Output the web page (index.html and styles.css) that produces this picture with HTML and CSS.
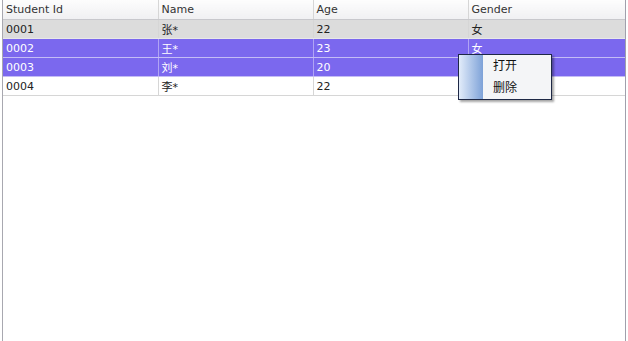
FILE: index.html
```html
<!DOCTYPE html>
<html lang="zh">
<head>
    <meta charset="UTF-8">
    <title>Students</title>
    <link rel="stylesheet" href="styles.css">
</head>
<body>
    <div class="grid">
        <table class="student-table">
            <colgroup>
                <col class="col-fixed">
                <col class="col-fixed">
                <col class="col-fixed">
                <col>
            </colgroup>
            <thead>
                <tr>
                    <th>Student Id</th>
                    <th>Name</th>
                    <th>Age</th>
                    <th>Gender</th>
                </tr>
            </thead>
            <tbody>
                <tr class="current">
                    <td>0001</td><td>张*</td><td>22</td><td>女</td>
                </tr>
                <tr class="selected">
                    <td>0002</td><td>王*</td><td>23</td><td>女</td>
                </tr>
                <tr class="selected">
                    <td>0003</td><td>刘*</td><td>20</td><td></td>
                </tr>
                <tr>
                    <td>0004</td><td>李*</td><td>22</td><td></td>
                </tr>
            </tbody>
        </table>

        <ul class="context-menu">
            <li>打开</li>
            <li>删除</li>
        </ul>
    </div>
</body>
</html>
```

FILE: styles.css
```css
body {
    margin: 0;
    font-family: "DejaVu Sans", "Noto Sans CJK SC", sans-serif;
    font-size: 11px;
    background-color: white;
}

.grid {
    position: relative;
    margin-left: 2px;
    width: 622px;
    height: 341px;
    border-left: 1px solid #a8a8b0;
    border-right: 1px solid #a0a0ac;
}

.student-table {
    border-collapse: collapse;
    table-layout: fixed;
    width: 622px;
}

.col-fixed {
    width: 155px;
}

.student-table th,
.student-table td {
    height: 18px;
    padding: 0 0 0 3px;
    text-align: left;
    font-weight: normal;
    border-right: 1px solid #d6d6d6;
    border-bottom: 1px solid #d6d6d6;
    color: #222;
    white-space: nowrap;
    overflow: hidden;
}

.student-table th {
    height: 19px;
    background: linear-gradient(#fdfdfd, #f0f0f2);
    border-bottom: 1px solid #c8c8cc;
    color: #333;
}

.student-table th:last-child,
.student-table td:last-child {
    border-right: none;
}

.student-table tr.current td {
    background-color: #dcdcdc;
    border-bottom-color: #e8e8e8;
}

.student-table tr.selected td {
    background-color: #7b68ee;
    color: white;
    border-right-color: #b0a4f4;
    border-bottom-color: #c4bcf6;
}

.context-menu {
    position: absolute;
    left: 455px;
    top: 54px;
    width: 92px;
    margin: 0;
    padding: 0;
    list-style: none;
    border: 1px solid #1e2846;
    background: linear-gradient(to right, #e2ecfa, #7ea2d8 24px, #f4f5f7 24px);
    box-shadow: 2px 2px 2px rgba(0, 0, 0, 0.35);
}

.context-menu li {
    height: 22px;
    line-height: 22px;
    padding-left: 34px;
    color: #111;
    font-size: 12px;
}
```
